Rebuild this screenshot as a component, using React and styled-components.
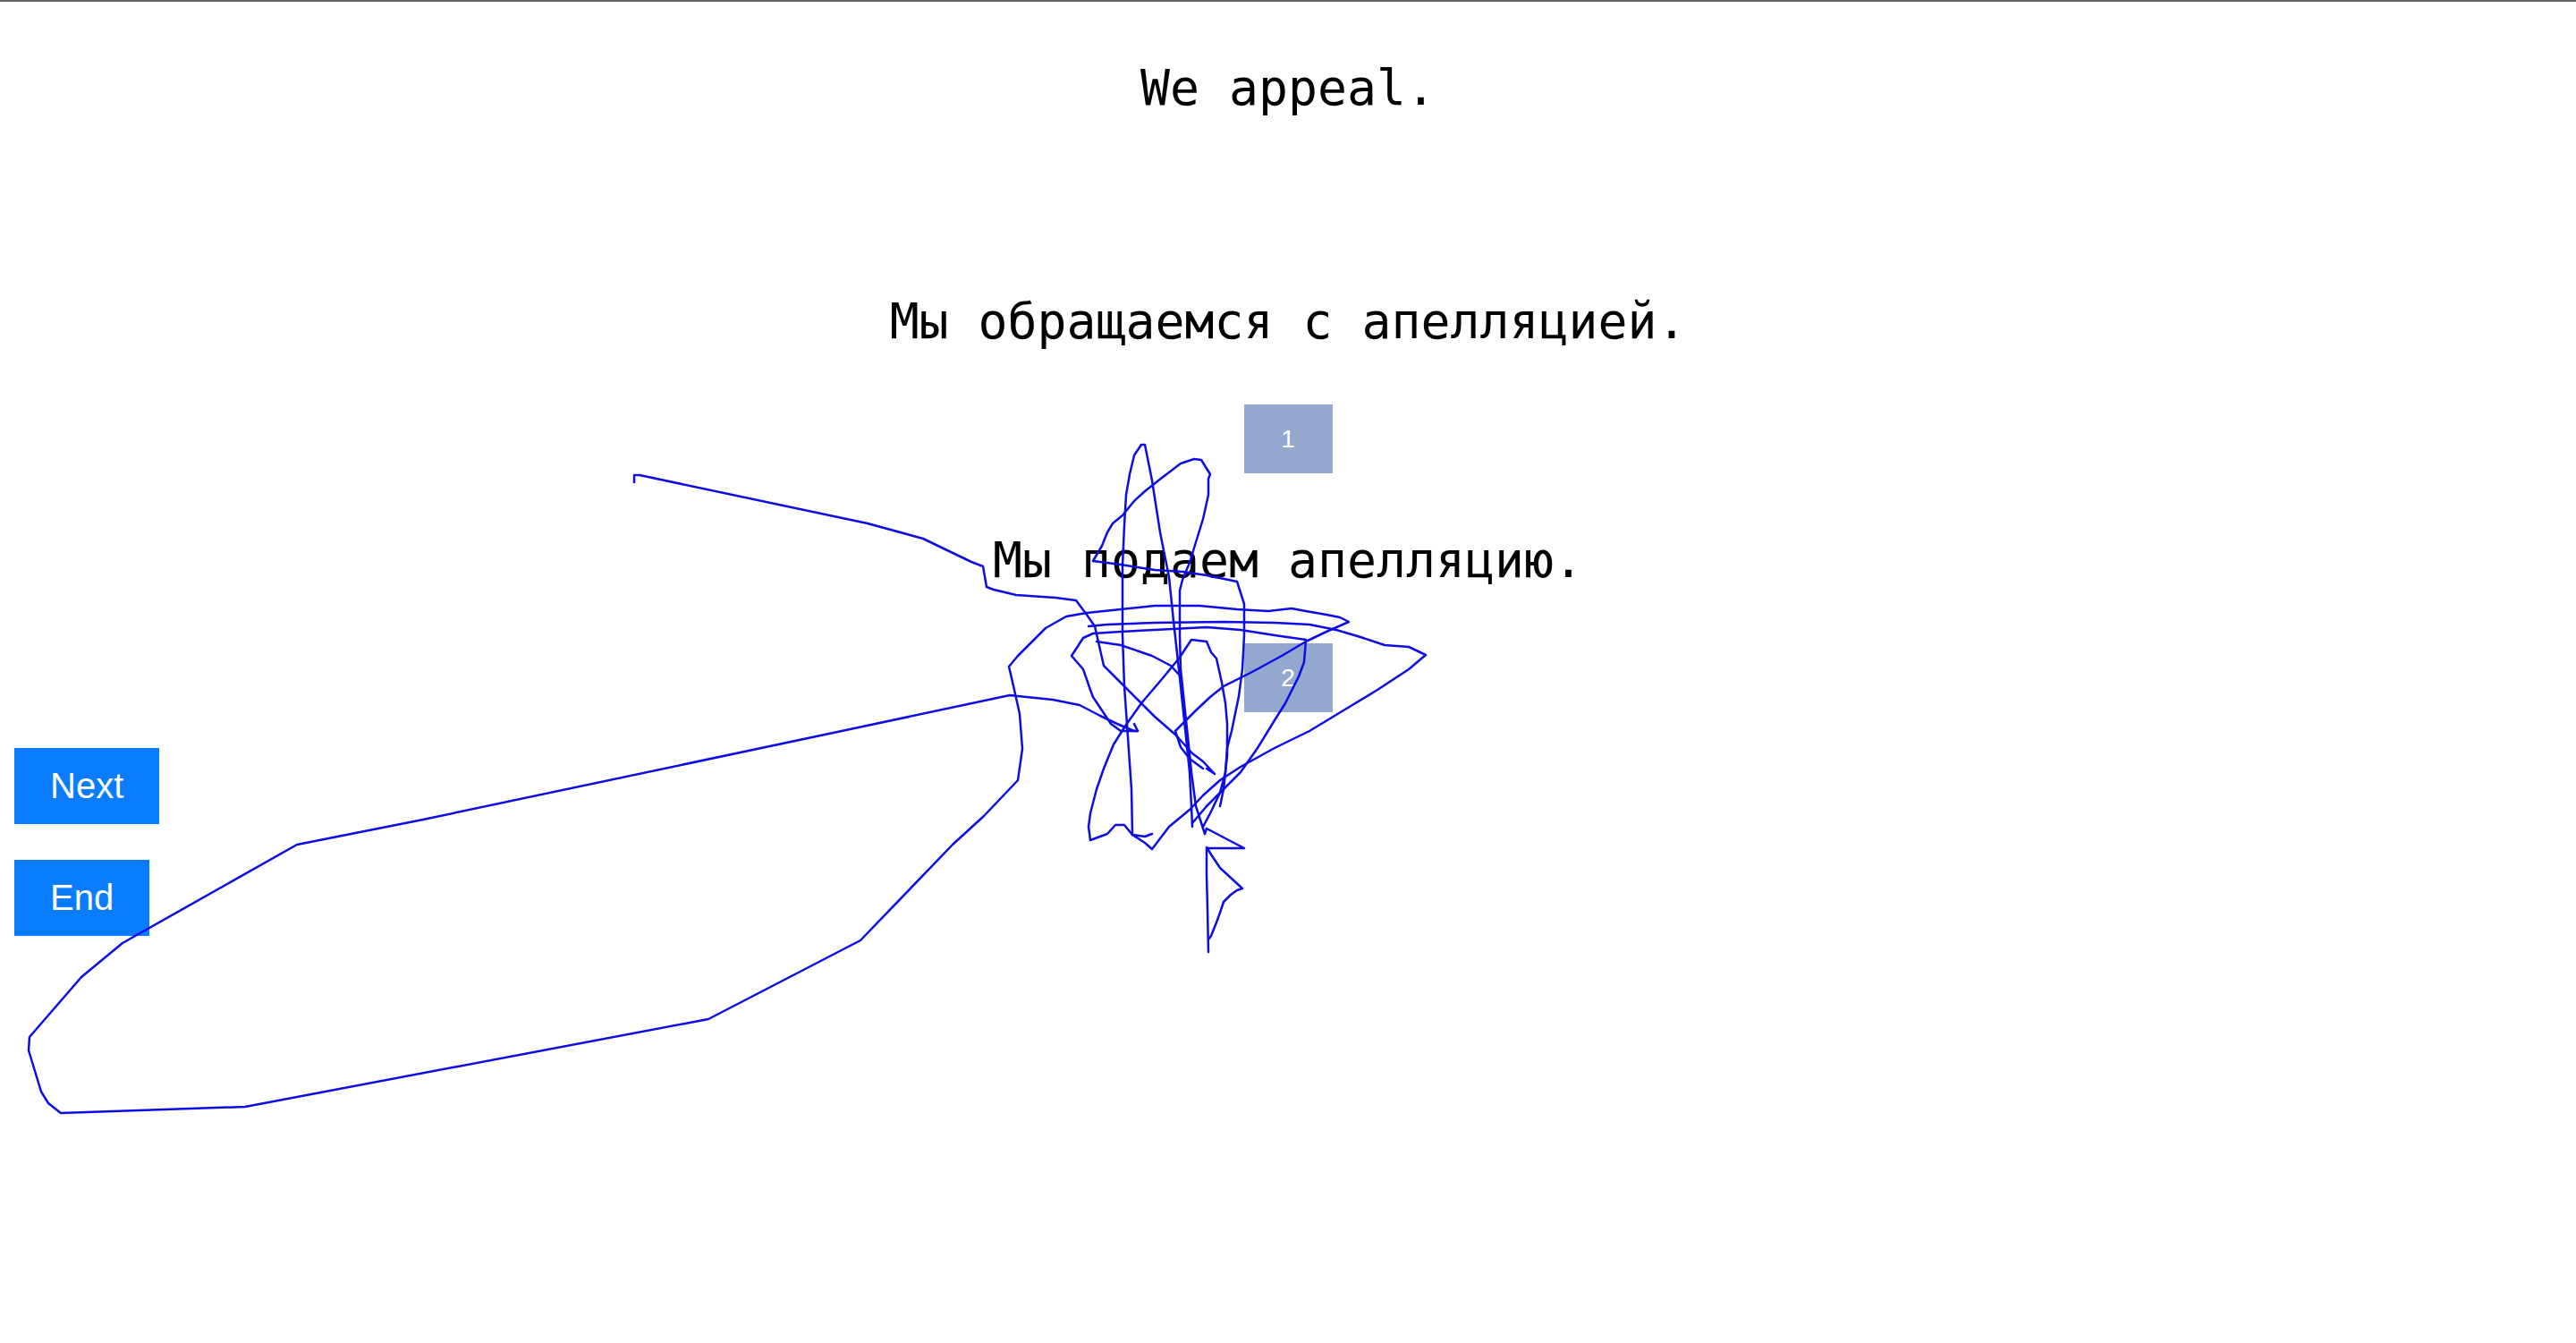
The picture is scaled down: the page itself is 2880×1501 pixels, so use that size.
import styled, { createGlobalStyle } from "styled-components";

const GlobalStyle = createGlobalStyle`
    html, body {
        margin: 0;
        padding: 0;
        background: #ffffff;
    }
`

const Page = styled.div`
    position: relative;
    min-height: 1501px;
    overflow: hidden;
    border-top: 2px solid #636363;
    box-sizing: border-box;
`

const Question = styled.div`
    display: flex;
    flex-direction: column;
    align-items: center;
    padding-top: 64px;
`

const Line = styled.p`
    margin: 0;
    margin-top: ${props => props.gap || 0}px;
    font-family: "DejaVu Sans Mono", monospace;
    font-size: 54.8px;
    line-height: 64px;
    color: #000;
    white-space: pre;
`

const Choice = styled.div`
    display: flex;
    align-items: center;
    justify-content: center;
    width: 99px;
    height: 77px;
    margin-top: ${props => props.gap || 0}px;
    background-color: #93a7cf;
    color: #fff;
    font-family: "Liberation Sans", Arial, sans-serif;
    font-size: 28px;
`

const Controls = styled.div`
    display: flex;
    flex-direction: column;
    align-items: flex-start;
    gap: 40px;
    margin: 40px 0 0 16px;
`

const NavButton = styled.button`
    border: none;
    border-radius: 0;
    margin: 0;
    padding: 20px 40px;
    background-color: #0a7cff;
    color: #fff;
    font-family: "Liberation Sans", Arial, sans-serif;
    font-size: 40px;
    line-height: 45px;
    cursor: pointer;
`

const Scribble = styled.svg`
    position: absolute;
    top: -2px;
    left: 0;
    width: 2880px;
    height: 1501px;
    pointer-events: none;
`

// mouse trail recorded over the page
const trails = [
    "709,539 709,531 715,531 970,585 1032,602 1086,628 1099,633 1103,656 1111,659 1136,665 1180,668 1203,671 1215,687 1224,700 1234,744 1253,763 1272,782 1291,801 1314,821 1333,842 1345,851 1358,865 1349,859",
    "1272,817 1268,817 1249,809 1230,800 1207,788 1177,782 1138,778 1129,777 941,817 473,916 332,944 137,1054 91,1092 33,1159 32,1174 46,1220 54,1233 68,1244 274,1237 792,1139 962,1051 1065,944 1100,912 1138,872 1143,837 1140,798 1134,771 1128,745 1138,733 1154,717 1169,702 1192,689 1215,685 1253,681 1291,677 1341,677 1383,681 1418,683 1444,680 1460,683 1483,687 1498,690 1508,695 1483,706 1460,717 1433,733 1398,752 1368,767 1353,779 1337,794 1322,809 1314,817 1320,835 1330,848 1345,859",
    "1288,932 1280,935 1266,933 1265,882 1261,824 1257,767 1255,710 1255,633 1257,587 1259,553 1263,530 1268,509 1276,497 1280,497 1288,537 1297,595 1307,645 1312,694 1318,748 1322,786 1326,824 1330,863 1332,901 1333,924",
    "1222,627 1232,610 1238,595 1244,585 1255,576 1268,560 1280,549 1299,534 1320,518 1335,513 1343,514 1353,530 1351,535 1351,553 1345,580 1337,606 1330,629 1322,648 1319,660 1319,710 1320,748 1324,786 1328,824 1332,863 1337,901 1347,932 1349,926 1391,948 1349,948 1349,978 1350,1016 1351,1064",
    "1349,947 1354,955 1364,970 1376,981 1389,993 1383,995 1376,1000 1368,1008 1364,1020 1360,1031 1354,1046 1351,1050",
    "1222,627 1253,631 1291,637 1322,639 1349,643 1383,650 1391,675 1391,710 1389,748 1385,778 1377,817 1372,836 1370,863 1364,886 1353,909 1345,924",
    "1217,700 1238,698 1291,696 1368,695 1425,696 1464,698 1494,704 1521,712 1548,721 1575,723 1594,732 1575,748 1540,771 1502,794 1464,817 1425,836 1387,857 1364,872 1345,889 1330,905 1307,924 1288,949 1280,942 1266,933",
    "1268,809 1272,817 1253,817 1242,809 1232,794 1222,779 1219,771 1211,748 1198,733 1211,713 1222,708 1253,706 1291,704 1349,701 1387,704 1425,710 1460,715 1458,740 1452,756 1437,786 1425,805 1406,836 1387,863 1368,882 1349,901 1333,920",
    "1226,717 1253,721 1288,733 1309,744 1320,756",
    "1364,901 1368,882 1372,844 1372,809 1370,786 1366,763 1360,736 1354,729 1349,717 1332,715 1318,736 1299,759 1276,786 1257,813 1245,832 1234,859 1226,882 1219,909 1217,924 1219,939 1238,932 1247,922 1257,922 1266,933",
]

export default function App() {
    return (
        <Page>
            <GlobalStyle />
            <Question>
                <Line>We appeal.</Line>
                <Line gap={197}>Мы обращаемся с апелляцией.</Line>
                <Choice gap={61}>1</Choice>
                <Line gap={65}>Мы подаем апелляцию.</Line>
                <Choice gap={61}>2</Choice>
            </Question>
            <Controls>
                <NavButton>Next</NavButton>
                <NavButton>End</NavButton>
            </Controls>
            <Scribble viewBox="0 0 2880 1501">
                {trails.map((pts, i) => (
                    <polyline key={i} points={pts} fill="none" stroke="#0c0ce4" strokeWidth="2.5" strokeLinejoin="round" strokeLinecap="round" />
                ))}
            </Scribble>
        </Page>
    )
}
